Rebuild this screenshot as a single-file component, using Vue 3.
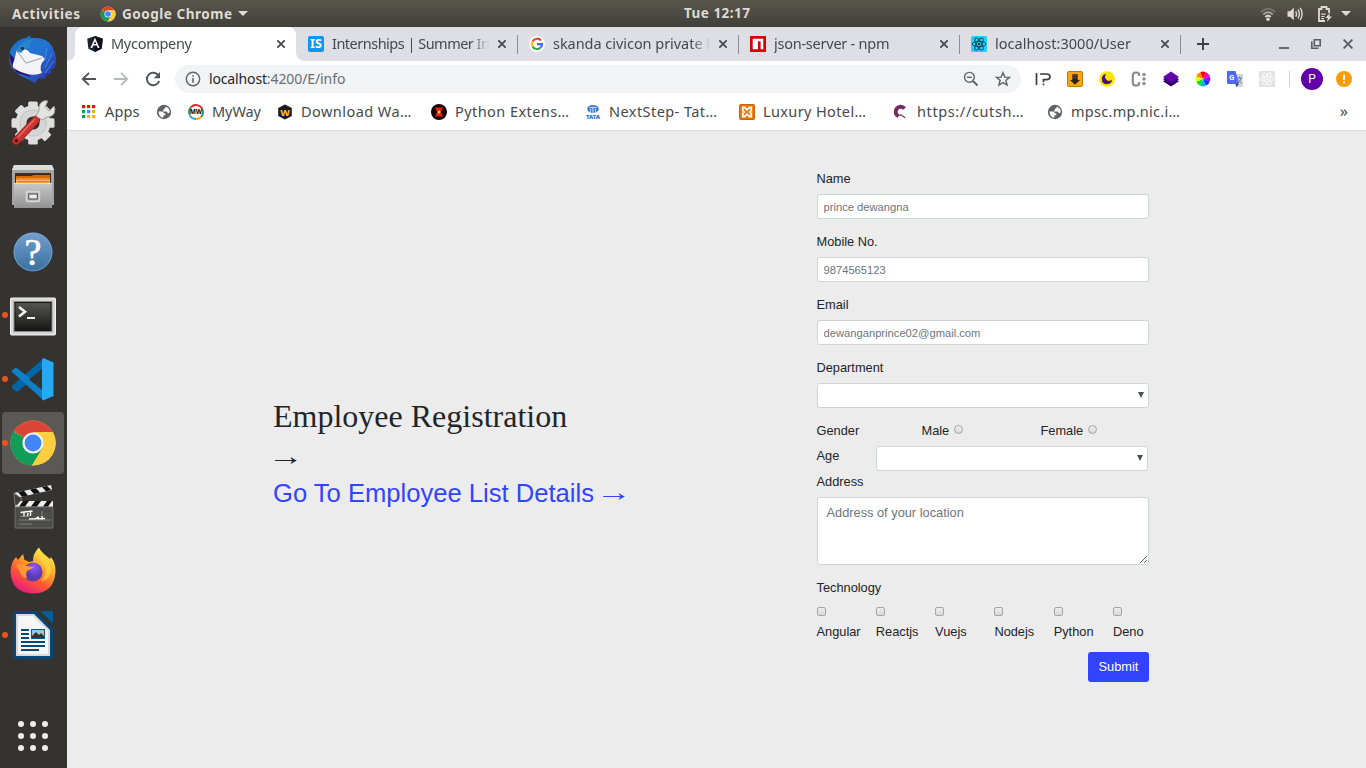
<script setup>
// Spreads a label over a given width by adjusting its letter spacing.
const vFit = {
  mounted(el, { value }) {
    if (!value) return
    const n = el.textContent.length
    el.style.letterSpacing = (value - el.getBoundingClientRect().width) / (n - 1) + 'px'
  }
}

const svg = (body, box = 16, w = box) =>
  `<svg width="${w}" height="${w}" viewBox="0 0 ${box} ${box}" style="display:block">${body}</svg>`

const chrome = () => `
  <circle cx="24" cy="24" r="22.5" fill="#ffcd40"/>
  <path d="M24 24L4.8 12.3A22.5 22.5 0 0 1 43.6 13H24z" fill="#db4437"/>
  <path d="M24 24L4.6 12.6A22.5 22.5 0 0 0 23 46.5L34 29z" fill="#0f9d58"/>
  <path d="M24 13H44A22.5 22.5 0 0 1 23 46.5L34 28z" fill="#ffcd40"/>
  <circle cx="24" cy="24" r="10.6" fill="#f4f4f4"/><circle cx="24" cy="24" r="8.4" fill="#4285f4"/>`

const gear = Array.from({ length: 8 }, (_, i) =>
  `<rect x="19.2" y="2.5" width="9.6" height="10" rx="1.5" transform="rotate(${i * 45} 24 24)"/>`).join('')

const atom = (c, w) => [0, 60, 120].map(a =>
  `<ellipse cx="8" cy="8" rx="6.8" ry="2.6" fill="none" stroke="${c}" stroke-width="${w}" transform="rotate(${a} 8 8)"/>`).join('') +
  `<circle cx="8" cy="8" r="1.2" fill="${c}"/>`

const globe = svg(`<circle cx="8" cy="8" r="7.2" fill="#5f6368"/>
  <path d="M2.4 7.4H6Q7.6 7.6 7.6 9.2H9.3V11.2H7.4V13.7Q3 13.2 2.4 7.4z" fill="#fff"/>
  <path d="M9.6 2.4V3.4Q9.4 4.6 7.9 4.6V5.6Q7.9 6.4 6.9 6.5V7.4H10.5Q11.4 7.6 11.4 8.8L13.4 9.2Q14.8 4.4 9.6 2.4z" fill="#fff"/>`)

const tabs = [
  { t: 'Mycompeny', w: 81, on: true, i: svg('<path d="M8 0L15.8 2.7 14.6 12.8 8 16 1.4 12.8 .2 2.7z" fill="#1d2230"/><path d="M8 0L15.8 2.7 14.6 12.8 8 16z" fill="#0b0e18"/><path d="M3.4 12L8 1.8 12.6 12H10.8L9.8 9.6H6.2L5.2 12zM8 5.3L6.8 8.1H9.2z" fill="#fff" fill-rule="evenodd"/>') },
  { t: 'Internships | Summer In', w: 158, i: svg('<rect width="16" height="16" rx="2" fill="#0a97f2"/><text x="8" y="12.4" font-family="Noto Sans, sans-serif" font-weight="700" font-size="12.5" text-anchor="middle" fill="#fff">IS</text>') },
  { t: 'skanda civicon private l', w: 157, i: svg('<circle cx="8" cy="8" r="8" fill="#fff"/><g fill="none" stroke-width="2.2"><path d="M12 4.5A5.1 5.1 0 0 0 3.6 5.5" stroke="#ea4335"/><path d="M3.6 5.5A5.1 5.1 0 0 0 3.6 10.6" stroke="#fbbc05"/><path d="M3.6 10.6A5.1 5.1 0 0 0 11.4 11.7" stroke="#34a853"/><path d="M8 8.2H13A5 5 0 0 1 11.4 11.7" stroke="#4a6cf5"/></g>') },
  { t: 'json-server - npm', w: 115.5, i: svg('<rect width="16" height="16" fill="#d80008"/><path d="M2.7 2.7H13.3V13.3H10.6V5.3H8V13.3H2.7z" fill="#fff"/>') },
  { t: 'localhost:3000/User', w: 136, i: svg('<rect width="16" height="16" rx="1.5" fill="#20d0fc"/>' + atom('#17424f', 0.9)) }
]

const wheel = ['#ff0000', '#ff00b0', '#a000ff', '#0030ff', '#00b5ff', '#00e030', '#e6ff00', '#ff8a00']
const exts = [
  svg('<path d="M1.5 2V14M5 3H11.5Q15 3 15 5.8T11.5 8.6H8.5V11.2M8.5 12.6V14.3" fill="none" stroke="#3c3c3c" stroke-width="1.7"/>'),
  svg('<rect x=".5" y=".5" width="15" height="15" rx="1" fill="#fca506" stroke="#b97a09"/><path d="M5.3 3.2H10.7V9H13L8 13.8 3 9H5.3z" fill="#262320"/><path d="M5.3 4.7H10.7M5.3 6.7H10.7" stroke="#8a610d" stroke-width=".7"/>'),
  svg('<circle cx="8" cy="8" r="7.8" fill="#fde400"/><path d="M7.2 3.1A5.1 5.1 0 1 0 13 8.6 4 4 0 0 1 7.2 3.1z" fill="#4b0e7d"/>'),
  svg('<path d="M8 5V3.6Q8 1.5 5 1.5 1.8 1.5 1.8 4.6V11.4Q1.8 14.5 5 14.5 8 14.5 8 12.4V11" fill="none" stroke="#8c8c8c" stroke-width="2.2"/><g fill="#8c8c8c"><circle cx="13" cy="3.5" r="1.7"/><circle cx="13" cy="8" r="1.7"/><circle cx="13" cy="12.5" r="1.7"/></g>'),
  svg('<path d="M0 10.2L8 5 16 10.2 8 15.6z" fill="#2c0060"/><path d="M0 8.2L8 3 16 8.2 8 13.4z" fill="#430086"/><path d="M0 6L8 .6 16 6 8 11.2z" fill="#6200ad"/>'),
  svg(wheel.map((c, i) =>
    `<path d="M8 8L5.2 1.2A7.3 7.3 0 0 1 10.8 1.2z" fill="${c}" transform="rotate(${i * 45} 8 8)"/>`).join('')),
  svg('<path d="M6 3H16V16H9z" fill="#d4d6da"/><path d="M0 0H8.5L12 13H1.5Q0 13 0 11.5z" fill="#4c69f5"/><path d="M8.3 12.9H12L9.4 16z" fill="#3347b5"/><text x="4.9" y="9.4" font-family="Roboto, sans-serif" font-weight="700" font-size="7.5" text-anchor="middle" fill="#fff">G</text><path d="M10 7H15M12.5 5.6V7M14.2 7Q13.5 10.5 10.7 12.4M11.3 8.5Q12.5 11.5 14.7 12.3" stroke="#6d7f90" fill="none"/>'),
  svg('<rect width="16" height="16" rx="1" fill="#e2e2e2"/>' + atom('#fafafa', 0.9))
]

const marks = [
  { x: 75, t: 'Apps', w: 34.5, i: svg(['#e8150c', '#e8150c', '#e8150c', '#0f9d58', '#4285f4', '#f4b400', '#0f9d58', '#f4b400', '#f4b400'].map((c, k) => `<rect x="${1 + (k % 3) * 5}" y="${1 + Math.floor(k / 3) * 5}" width="3.2" height="3.2" fill="${c}"/>`).join('')) },
  { x: 32, t: '', i: globe },
  { x: 89, t: 'MyWay', w: 49, i: svg('<circle cx="8" cy="8" r="7.3" fill="#fff"/><g fill="none" stroke-width="1.8"><path d="M1.3 10A7 7 0 0 1 3 3.1" stroke="#0a9d56"/><path d="M3 3.1A7 7 0 0 1 14.5 5.5" stroke="#e8202c"/><path d="M14.5 5.5A7 7 0 0 1 13 13" stroke="#0a9d56"/><path d="M13 13A7 7 0 0 1 8 15" stroke="#f8a714"/><path d="M8 15A7 7 0 0 1 1.3 10" stroke="#18a7e8"/></g><text x="8" y="10.4" font-family="Noto Sans, sans-serif" font-weight="800" font-size="6.4" text-anchor="middle" fill="#151515">MW</text>') },
  { x: 154, t: 'Download Wa…', w: 110.5, i: svg('<path d="M8 .6L14.8 4V12L8 15.5 1.2 12V4z" fill="#191b24"/><text x="8" y="11.8" font-family="Noto Sans, sans-serif" font-weight="800" font-size="9.6" text-anchor="middle" fill="#fbbd18">W</text>') },
  { x: 154, t: 'Python Extens…', w: 114, i: svg('<circle cx="8" cy="8" r="8" fill="#180303"/><path d="M4 3.6H12L9.8 8 12 12.4H4L6.2 8z" fill="#e8200c"/><circle cx="8" cy="8" r="1.5" fill="#ffc528"/>') },
  { x: 154, t: 'NextStep- Tat…', w: 108, i: svg('<ellipse cx="8" cy="5" rx="5.8" ry="3.9" fill="#3b77cc"/><path d="M4.2 3.9Q8 2.6 11.8 3.9M8 3.5V9M5 8Q5.8 7 5.8 5M11 8Q10.2 7 10.2 5" stroke="#fff" fill="none" stroke-width=".8"/><text x="8" y="15" font-family="Noto Sans, sans-serif" font-weight="800" font-size="6" text-anchor="middle" fill="#2767be">TATA</text>') },
  { x: 153, t: 'Luxury Hotel…', w: 103, i: svg('<rect x=".5" y=".5" width="15" height="15" rx="1" fill="#f07a12" stroke="#c85f06"/><path d="M3.8 3.4H5.6L8 6 10.4 3.4H12.2V6.6L10.8 8 12.2 9.4V12.6H10.4L8 10 5.6 12.6H3.8V9.4L5.2 8 3.8 6.6z" fill="none" stroke="#fff" stroke-width="1.7" stroke-linejoin="round"/>') },
  { x: 155, t: 'https://cutsh…', w: 106.5, gap: true, i: svg('<path d="M12.5 4.6A5 5 0 1 0 6.5 12.3" fill="none" stroke="#772b63" stroke-width="4"/><path d="M6.3 11.5L9 10.8 13.2 13.7" fill="none" stroke="#772b63" stroke-width="1.2"/>') },
  { x: 160, t: 'mpsc.mp.nic.i…', w: 109, i: globe }
]

const dock = [
  // Thunderbird
  { i: svg(`<defs><linearGradient id="tb" x1="0" y1="0" x2="1" y2="1"><stop offset="0" stop-color="#1c74c5"/><stop offset=".5" stop-color="#2374d2"/><stop offset="1" stop-color="#3022a0"/></linearGradient></defs>
    <path d="M3 12Q8 4 18 2.5 20 .5 22 .5L21 3Q38 1 44 13 50 25 45 34L43 33 42 39 38 39 36 44 30 43 26 48 12 41Q0 34 0 23 0 16 3 12z" fill="url(#tb)"/>
    <path d="M0 18Q1 31 8 38L22 42 14 32z" fill="#2b1473"/>
    <path d="M8 14Q18 13 21 18L33 21 36 24Q29 31 33 38 22 43 6 34 2 32 5 26z" fill="#f4f4f7"/>
    <path d="M8 16L17 28 33 23" fill="none" stroke="#a9adb8" stroke-width="1.1"/>
    <path d="M7 16Q13 4 26 4 20 7 21 13 15 13 12 18z" fill="#2787c8"/><circle cx="13.5" cy="13.5" r="1.7" fill="#33363d"/>
    <path d="M38 13L36 25M43 18L36 33M45 26L36 38" fill="none" stroke="#3c90e5" stroke-width="1"/>`, 48) },
  // Settings
  { i: svg(`<g fill="#dedede">${gear}<circle cx="24" cy="24" r="17.5"/></g><circle cx="24" cy="24" r="13.6" fill="#c2c2c2"/><circle cx="24" cy="24" r="12.6" fill="#d6d6d6"/><circle cx="24" cy="24" r="6.6" fill="#343330"/>
    <path d="M7 42L27 21" stroke="#8e1b1b" stroke-width="8" stroke-linecap="round"/><path d="M7 42L27 21" stroke="#ce3434" stroke-width="6.4" stroke-linecap="round"/><path d="M9 38L26 20" stroke="#e87468" stroke-width="1.2"/><circle cx="7.4" cy="41.8" r="1.8" fill="#500d0d"/>
    <path d="M27 17L30 12Q29 3 36 1.5L39 2 36 8 40 12 45 7 46 10Q46 18 38 18L33 21z" fill="#e3e3e1" stroke="#8f8f8d" stroke-width=".8"/>`, 48) },
  // Files
  { i: svg(`<defs><linearGradient id="fl" x1="0" y1="0" x2="0" y2="1"><stop offset="0" stop-color="#c9c9c9"/><stop offset="1" stop-color="#929292"/></linearGradient></defs>
    <path d="M5 2H43L45 7V42H3V7z" fill="#a4a4a4"/><path d="M5 2H43L45 7H3z" fill="#dcdcdc"/><rect x="6" y="10" width="36" height="12" fill="#3a2e27"/>
    <path d="M7 13H23L24 12H41V20H7z" fill="#dc6312"/><path d="M7 15H41V20H7z" fill="#f8b95e"/><path d="M7 16H41M8 18.7H40" stroke="#df6210" stroke-width="1.1"/>
    <path d="M5 20H43V45H5z" fill="url(#fl)"/><path d="M5 20.5H43" stroke="#dedede"/><rect x="17.5" y="28.5" width="13" height="10" rx="1.5" fill="#bdbdbd" stroke="#d5d5d5" stroke-width="1.5"/><rect x="19.8" y="31" width="8.5" height="5" fill="#eee" stroke="#444"/>`, 48) },
  // Help
  { i: svg(`<defs><linearGradient id="hp" x1="0" y1="0" x2="0" y2="1"><stop offset="0" stop-color="#739fd0"/><stop offset="1" stop-color="#38709f"/></linearGradient></defs>
    <circle cx="24" cy="25" r="19.5" fill="url(#hp)"/><circle cx="24" cy="25" r="18.8" fill="none" stroke="#82afdb" stroke-opacity=".6"/>
    <text x="24" y="38" font-family="Liberation Serif, serif" font-size="38" text-anchor="middle" fill="#fff" stroke="#fff" stroke-width=".7">?</text>`, 48) },
  // Terminal
  { dot: true, i: svg(`<defs><linearGradient id="tm" x1="0" y1="0" x2="0" y2="1"><stop offset="0" stop-color="#555552"/><stop offset=".55" stop-color="#333331"/><stop offset="1" stop-color="#161616"/></linearGradient></defs>
    <rect x="1.5" y="7" width="45" height="37" rx="1" fill="#d7d7d5" stroke="#f2f2f2" stroke-width="1"/><rect x="4.5" y="10" width="39" height="31" fill="#8b8b89"/><rect x="6" y="11.5" width="36" height="28" fill="url(#tm)" stroke="#161616"/>
    <path d="M10 16L16 20.7 10 25.4" fill="none" stroke="#eee" stroke-width="2.6"/><path d="M18 27H26" stroke="#eee" stroke-width="2"/>`, 48) },
  // VS Code
  { dot: true, i: svg(`<path d="M3 31L35 3 35 14 9 36.5Q7 37 3 33z" fill="#0065a9"/><path d="M3 17Q2 15.5 7 12.5L35 34V45.5L3 17z" fill="#0c80c8"/>
    <path d="M34 3L44.5 7.5V41L34 45.5 33 44V5z" fill="#27a9f2"/><path d="M33 14L20 24.5 33 35z" fill="#343330"/>`, 48) },
  // Chrome
  { dot: true, on: true, i: svg(chrome(), 48) },
  // Video editor
  { i: svg(`<path d="M6 23H44V45.5H6z" fill="#4c4c4a"/><path d="M6 24H44V45H6z" fill="none" stroke="#6b6b69"/>
    <path d="M6 18H44V23.5H6z" fill="#eee"/><path d="M10 23.5L14 18H20L16 23.5zM22 23.5L26 18H32L28 23.5zM34 23.5L38 18H43L39 23.5z" fill="#111"/>
    <path d="M5 10L42 2 43 7 7 15z" fill="#e9e9e9"/><path d="M9 9.2L15 7.8 19 12.4 13 13.7zM21 6.6L27 5.2 31 9.6 25 11zM33 4L38 3 42.5 7 37 8.3z" fill="#111"/>
    <path d="M5 10L13 16 8 22H6z" fill="#3c3c3c" stroke="#777"/>
    <path d="M11.5 29.5L23.5 28M15 30V33.5M19 30L18.5 33M21.5 29V33" stroke="#fff" stroke-width="1.4"/><path d="M20 36H26L30 34M28 36L36 35.5M33 33V37" stroke="#fff" stroke-width="1.4" fill="none"/><path d="M11 33.5H20M10 37H42M10 41H23M33 28V34" stroke="#979797" stroke-width=".7"/>`, 48) },
  // Firefox
  { i: svg(`<defs><linearGradient id="ff" x1=".8" y1=".05" x2=".25" y2="1"><stop offset="0" stop-color="#fff44f"/><stop offset=".35" stop-color="#ffa92b"/><stop offset=".65" stop-color="#ff5634"/><stop offset="1" stop-color="#e31587"/></linearGradient><radialGradient id="fp" cx=".55" cy=".25"><stop offset="0" stop-color="#9059ff"/><stop offset="1" stop-color="#5b3bb4"/></radialGradient></defs>
    <path d="M30 .5Q32 5 38 9.5L41 12 42 10Q47 17 46.5 25 45 46.5 24 46.5 2.5 46 1.5 24.5 2 15 7 10L9 13 14 7 15.5 13Q18 13.5 20 15L24 14Q24 6 30 .5z" fill="url(#ff)"/>
    <circle cx="24" cy="25" r="9.5" fill="url(#fp)"/><path d="M7 18Q13 16 18 19L25 20Q23 22 18.5 23.5 16 27 18 31 13 31 11 25z" fill="#ff9735"/><path d="M30 4Q29 13 35 18 40 25 32 34 41 33 42 23 41 14 35 10z" fill="#ffd83d" opacity=".7"/>`, 48) },
  // Writer
  { dot: true, i: svg(`<path d="M7 0H27L44 18V45Q44 48 41 48H7Q4 48 4 45V3Q4 0 7 0z" fill="#04497a"/><path d="M7 3H25L41 19V45H7z" fill="#d9d9d9"/><path d="M9 5H24L39 20V43H9z" fill="#f6f6f6"/>
    <path d="M26 0H44V18z" fill="#343330"/><path d="M31 0H42Q44 0 44 2V12.5z" fill="#075d98"/><path d="M12 19H20M12 23H20M12 27H20M12 31H36M12 35H36M12 39H30" stroke="#064a78" stroke-width="2"/><rect x="22.5" y="18.5" width="13" height="9" fill="#8fcbee" stroke="#06588e"/><path d="M23 27V25L27 21 30 24 32 22 35 25V27z" fill="#343434"/><circle cx="33.5" cy="20.5" r="1.3" fill="#e9b93e"/>`, 48) }
]

const tech = ['Angular', 'Reactjs', 'Vuejs', 'Nodejs', 'Python', 'Deno']
const fields = [
  { l: 'Name', p: 'prince dewangna' },
  { l: 'Mobile No.', p: '9874565123' },
  { l: 'Email', p: 'dewanganprince02@gmail.com' }
]
const smallChrome = svg(chrome(), 48, 16)
</script>

<template>
  <div class="desktop">
    <header class="panel">
      <div class="panel-left">
        <span class="activities"><span v-fit="68">Activities</span></span>
        <span v-html="smallChrome"></span>
        <span class="app-name"><span v-fit="110">Google Chrome</span></span>
        <i class="caret"></i>
      </div>
      <div class="clock"><span v-fit="66">Tue 12:17</span></div>
      <div class="status">
        <svg width="16" height="16" viewBox="0 0 16 16" fill="none" stroke-width="1.8"><path d="M1 6Q8-.5 15 6" stroke="#77746d" /><path d="M3.2 8.5Q8 4 12.8 8.5" stroke="#a5a29a" /><path d="M5.3 11Q8 8.6 10.7 11" stroke="#dfdbd2" /><circle cx="8" cy="13.2" r="1.7" fill="#dfdbd2" /></svg>
        <svg class="vol" width="16" height="16" viewBox="0 0 16 16"><path d="M.5 5.3H3L6.8 1.8V14.2L3 10.7H.5z" fill="#dfdbd2" /><path d="M8.7 5.3Q10.3 8 8.7 10.7M11 3.5Q13.7 8 11 12.5M13.2 1.8Q17 8 13.2 14.2" fill="none" stroke="#dfdbd2" stroke-width="1.4" /></svg>
        <svg class="bat" width="16" height="16" viewBox="0 0 16 16"><path d="M8 15H2V3H4.5V1H9.5V3H12V7" fill="none" stroke="#dfdbd2" stroke-width="1.8" /><path d="M4.3 8.2H8.5M4.3 10.5H7.5M4.3 12.7H7" stroke="#dfdbd2" stroke-width="1.2" /><path d="M12.8 7L8.4 12H11L9.8 16 15 10.6H12.3z" fill="#dfdbd2" /></svg>
        <i class="caret"></i>
      </div>
    </header>

    <div class="main">
      <nav class="dock">
        <div v-for="(d, k) in dock" :key="k" class="slot" :class="{ on: d.on }">
          <i v-if="d.dot" class="run-dot"></i>
          <span v-html="d.i"></span>
        </div>
        <div class="show-apps"><i v-for="n in 9" :key="n"></i></div>
      </nav>

      <section class="browser">
        <div class="tabs">
          <div v-for="(t, k) in tabs" :key="k" class="tab" :class="{ on: t.on, sep: k > 1 }">
            <span v-html="t.i"></span>
            <span class="tab-title"><span v-fit="t.w" class="fit">{{ t.t }}</span></span>
            <svg class="x" width="8" height="8" viewBox="0 0 8 8"><path d="M.3.3L7.7 7.7M7.7.3L.3 7.7" stroke="#45484c" stroke-width="1.8" /></svg>
          </div>
          <div class="new-tab"><svg width="12" height="12" viewBox="0 0 12 12"><path d="M6 0V12M0 6H12" stroke="#3c4043" stroke-width="1.9" /></svg></div>
          <div class="win">
            <svg width="10" height="10" viewBox="0 0 10 10"><path d="M0 9H10" stroke="#5a5d61" stroke-width="1.8" /></svg>
            <svg width="10" height="10" viewBox="0 0 10 10" fill="none" stroke="#5a5d61" stroke-width="1.6"><path d="M3.3.8H9.2V6.7H3.3z" /><path d="M.8 2.5V9.2H7.5" /></svg>
            <svg width="10" height="10" viewBox="0 0 10 10"><path d="M.6.6L9.4 9.4M9.4.6L.6 9.4" stroke="#5a5d61" stroke-width="1.9" /></svg>
          </div>
        </div>

        <div class="toolbar">
          <div class="nav-btns">
            <svg width="16" height="16" viewBox="0 0 16 16"><path d="M15 8H2.5M8 1.8L1.8 8 8 14.2" fill="none" stroke="#505357" stroke-width="1.9" /></svg>
            <svg width="16" height="16" viewBox="0 0 16 16"><path d="M1 8H13.5M8 1.8L14.2 8 8 14.2" fill="none" stroke="#b7b9bb" stroke-width="1.9" /></svg>
            <svg width="16" height="16" viewBox="0 0 16 16"><path d="M13.5 4.5A6.3 6.3 0 1 0 14.2 10" fill="none" stroke="#505357" stroke-width="1.9" /><path d="M15 1V7.2H8.8z" fill="#505357" /></svg>
          </div>
          <div class="omnibox">
            <svg width="16" height="16" viewBox="0 0 16 16"><circle cx="8" cy="8" r="6.7" fill="none" stroke="#5f6368" stroke-width="1.4" /><path d="M8 7V11.7M8 4.2V5.7" stroke="#5f6368" stroke-width="1.6" /></svg>
            <span class="url"><span v-fit="58">localhost</span><span v-fit="78.5" class="path">:4200/E/info</span></span>
            <svg class="mag" width="16" height="16" viewBox="0 0 16 16"><g fill="none" stroke="#5f6368" stroke-width="1.4"><circle cx="6.4" cy="6.3" r="4.9" /><path d="M10 10L14.5 14.5" stroke-width="1.9" /><path d="M4 6.3H8.8" /></g></svg>
            <svg width="16" height="16" viewBox="0 0 16 16"><path d="M8 1.7L9.8 6.1 14.5 6.4 10.9 9.5 12.1 14.1 8 11.6 3.9 14.1 5.1 9.5 1.5 6.4 6.2 6.1z" fill="none" stroke="#5f6368" stroke-width="1.4" /></svg>
          </div>
          <div class="exts"><span v-for="(e, k) in exts" :key="k" v-html="e"></span></div>
          <i class="divider"></i>
          <div class="avatar">P</div>
          <svg class="warn" width="16" height="16" viewBox="0 0 16 16"><circle cx="8" cy="8" r="8" fill="#fb9c06" /><path d="M8 3.6V8.8M8 10.4V12.2" stroke="#fff" stroke-width="2" /></svg>
        </div>

        <div class="bookmarks">
          <div v-for="(m, k) in marks" :key="k" class="mark" :class="{ wide: m.gap }" :style="{ width: m.x + 'px' }">
            <span v-html="m.i"></span>
            <span v-if="m.t" v-fit="m.w" class="fit">{{ m.t }}</span>
          </div>
          <span class="more">»</span>
        </div>

        <main class="page">
          <div class="intro">
            <h1>Employee Registration</h1>
            <p class="line"><span class="long-arrow">→</span></p>
            <a>Go To Employee List Details <span class="long-arrow">→</span></a>
          </div>

          <form class="form" @submit.prevent>
            <div v-for="f in fields" :key="f.l" class="field">
              <label>{{ f.l }}</label>
              <input type="text" :placeholder="f.p" />
            </div>
            <div class="field">
              <label>Department</label>
              <div class="select"><i></i></div>
            </div>
            <div class="gender">
              <span class="g-label">Gender</span>
              <label class="g-male">Male<input type="radio" name="gender" /></label>
              <label>Female<input type="radio" name="gender" /></label>
            </div>
            <div class="age">
              <label>Age</label>
              <div class="select"><i></i></div>
            </div>
            <label class="addr-label">Address</label>
            <textarea placeholder="Address of your location"></textarea>
            <label class="tech-label">Technology</label>
            <div class="tech">
              <label v-for="t in tech" :key="t"><input type="checkbox" /><span>{{ t }}</span></label>
            </div>
            <button>Submit</button>
          </form>
        </main>
      </section>
    </div>
  </div>
</template>

<style>
body { margin: 0; overflow: hidden; }
</style>

<style scoped>
* { box-sizing: border-box; }
svg { display: block; flex: none; }
.desktop { width: 1366px; height: 768px; display: flex; flex-direction: column; overflow: hidden; font-family: "Noto Sans", "Open Sans", sans-serif; }
.desktop span { white-space: nowrap; }

.panel { height: 27px; flex: none; display: grid; grid-template-columns: 684px 66px 1fr; align-items: center; background: linear-gradient(#59564d, #403f3a); color: #dfdbd2; font-weight: 700; font-size: 13.5px; line-height: 26px; }
.panel-left { display: flex; align-items: center; padding-left: 12px; }
.panel-left span, .clock span { display: inline-block; }
.activities { width: 88px; }
.app-name { margin-left: 6px; width: 116px; }
.caret { width: 0; height: 0; border: 5px solid transparent; border-top-color: #dfdbd2; border-bottom: 0; }
.clock { width: 66px; margin-top: -1px; }
.status { display: flex; align-items: center; justify-content: flex-end; padding-right: 15px; }
.vol { margin-left: 11px; }
.bat { margin: 0 8px 0 14px; }

.main { flex: 1; display: flex; min-height: 0; }
.dock { width: 67px; flex: none; background: #343330; display: flex; flex-direction: column; }
.slot { position: relative; height: 64px; width: 66px; display: flex; align-items: center; justify-content: center; }
.slot.on { height: 62px; margin: 1px 2px; width: 62px; background: #5a5955; border-radius: 4px; }
.run-dot { position: absolute; left: 2px; top: 29px; width: 6px; height: 6px; border-radius: 50%; background: #e95420; }
.slot.on .run-dot { left: 0; top: 28px; }
.show-apps { margin: auto 0 17px 18px; display: grid; grid-template-columns: repeat(3, 6px); gap: 6px; }
.show-apps i { width: 6px; height: 6px; border-radius: 50%; background: #eee; }

.browser { flex: 1; display: flex; flex-direction: column; min-width: 0; background: #fff; }
.tabs { height: 34px; flex: none; background: #dedfe5; display: flex; padding-left: 8px; }
.tab { position: relative; width: 221px; display: flex; align-items: center; padding-left: 12px; color: #45484c; font-size: 14.5px; }
.tab.on { background: #fff; border-radius: 8px 8px 0 0; }
.tab.on::before, .tab.on::after { content: ""; position: absolute; bottom: 0; width: 8px; height: 8px; }
.tab.on::before { left: -8px; background: radial-gradient(circle at 0 0, transparent 7.5px, #fff 8px); }
.tab.on::after { right: -8px; background: radial-gradient(circle at 100% 0, transparent 7.5px, #fff 8px); }
.tab.sep::before, .new-tab::before { content: ""; position: absolute; left: 0; top: 8px; height: 19px; width: 1px; background: #8b8d92; }
.tab-title { width: 161px; margin-left: 8px; mask-image: linear-gradient(90deg, #000 138px, transparent 158px); line-height: 21px; height: 22px; }
.fit { display: inline-block; }
.x { margin-left: 5px; }
.new-tab { position: relative; width: 46px; display: flex; align-items: center; justify-content: center; }
.win { margin-left: auto; padding-right: 13px; display: flex; align-items: center; gap: 22px; }

.toolbar { height: 36px; flex: none; display: flex; align-items: center; }
.nav-btns { display: flex; gap: 16px; padding-left: 14px; width: 108px; }
.omnibox { width: 846px; height: 28px; border-radius: 14px; background: #f1f3f4; display: flex; align-items: center; padding: 0 10px; }
.url { margin-left: 8px; font-size: 14px; color: #24272a; display: flex; line-height: 20px; }
.path { color: #6a6e73; }
.mag { margin-left: auto; margin-right: 16px; }
.exts { display: flex; gap: 16px; margin-left: 14px; }
.divider { width: 1px; height: 16px; margin-left: 14px; background: #cfd1d4; }
.avatar { width: 22px; height: 22px; margin-left: 11px; border-radius: 50%; background: #6200a8; color: #fff; font: 12px/22px Roboto, sans-serif; text-align: center; }
.warn { margin-left: 13px; }

.bookmarks { height: 34px; flex: none; display: flex; align-items: center; padding: 0 0 4px 14px; border-bottom: 1px solid #dadce0; color: #45484c; font-size: 14.5px; line-height: 22px; }
.mark { display: flex; align-items: center; gap: 8px; flex: none; height: 22px; }
.mark.wide { gap: 9px; }
.mark .fit { margin-top: -2px; }
.more { margin-left: auto; padding-right: 18px; font-size: 16px; margin-top: -2px; }

.page { flex: 1; min-height: 0; background: #ececec; display: flex; font-family: "Liberation Sans", Arial, sans-serif; color: #212529; }
.intro { padding: 266px 0 0 206px; width: 749.5px; }
h1 { margin: 0; font: 400 32px/38px "Liberation Serif", "Times New Roman", serif; }
.line { margin: 4px 0 0; font-size: 25.6px; line-height: 36px; height: 36px; }
.long-arrow { display: inline-block; width: 25.6px; height: 36px; font-family: "Liberation Serif", serif; transform: translateY(-1px) scaleX(1.4); }
.intro a { display: block; height: 36px; color: #3344ff; font-size: 25.6px; line-height: 36px; }

.form { width: 332.5px; padding-top: 38px; font-size: 12.8px; line-height: 20px; display: flex; flex-direction: column; }
.field { height: 63px; }
.field label { display: block; height: 25px; }
input[type="text"], .select, textarea { display: block; width: 100%; height: 25px; background: #fff; border: 1px solid #ced4da; border-radius: 3px; font: 11.2px "Liberation Sans", Arial, sans-serif; padding: 1px 6px; outline: 0; }
input::placeholder, textarea::placeholder { color: #6c757d; opacity: 1; }
.select { display: flex; justify-content: flex-end; align-items: center; padding-right: 4px; }
.select i { border: 3.5px solid transparent; border-top: 6px solid #495057; border-bottom: 0; margin-bottom: 2px; }
.gender { display: flex; height: 25px; }
.g-label { width: 105px; }
.g-male { width: 119px; }
.gender label { display: flex; }
input[type="radio"], input[type="checkbox"] { appearance: none; margin: 0; width: 9px; height: 9px; border: 1px solid #a5a5a5; background: linear-gradient(#eee, #d8d8d8); }
input[type="radio"] { border-radius: 50%; margin: 4px 0 0 5px; }
input[type="checkbox"] { border-radius: 2px; display: block; }
.age { display: flex; height: 25px; }
.age label { width: 59.5px; }
.age .select { width: 272px; }
.addr-label { margin-top: 1px; height: 25px; }
textarea { height: 68px; font-size: 12.8px; padding: 7px 9px; resize: vertical; }
.tech-label { margin-top: 13px; height: 29px; }
.tech { display: grid; grid-template-columns: repeat(6, 59.3px); height: 45px; }
.tech span { display: block; margin-top: 6px; }
button { align-self: flex-end; width: 61px; height: 30px; padding: 0 0 1px; border: 0; border-radius: 3px; background: #3344ff; color: #fff; font: 12.8px "Liberation Sans", Arial, sans-serif; }
</style>
